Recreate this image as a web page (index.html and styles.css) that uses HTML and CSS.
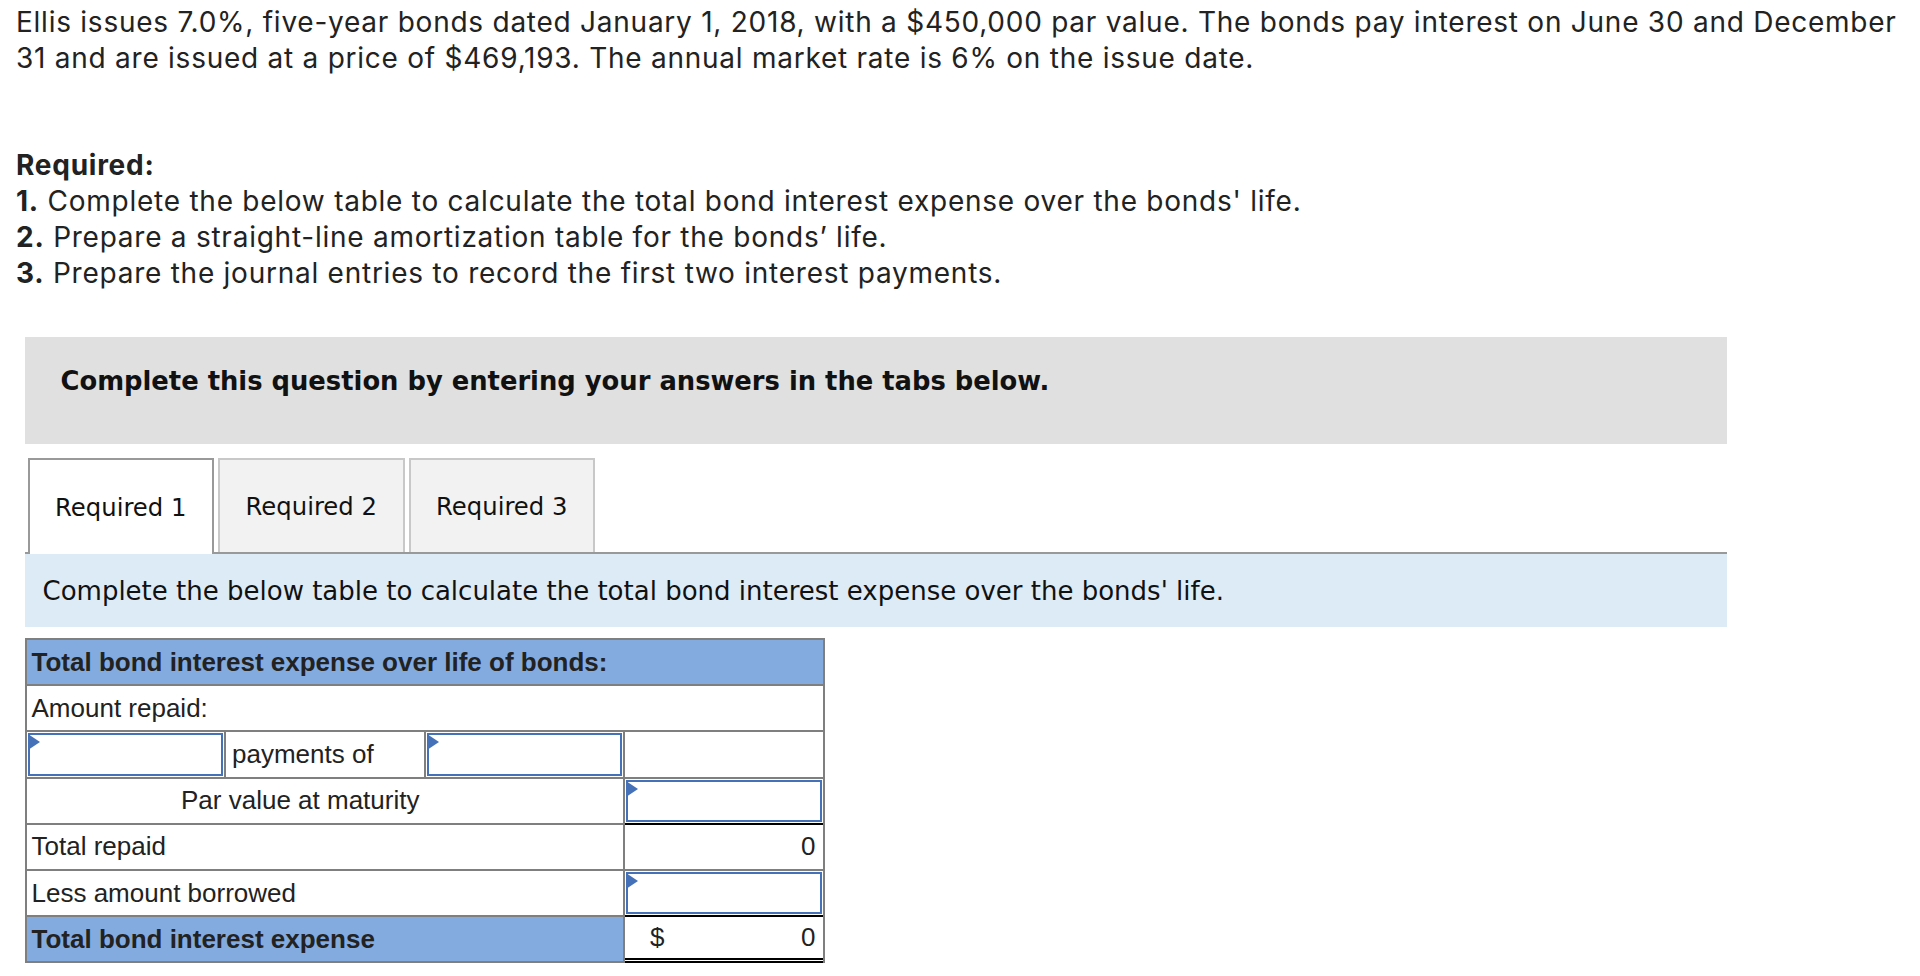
FILE: index.html
```html
<!DOCTYPE html>
<html lang="en">
<head>
<meta charset="utf-8">
<title>Bond interest expense</title>
<link rel="stylesheet" href="styles.css">
</head>
<body>
<div class="page">
  <p class="intro">Ellis issues 7.0%, five-year bonds dated January 1, 2018, with a $450,000 par value. The bonds pay interest on June 30 and December 31 and are issued at a price of $469,193. The annual market rate is 6% on the issue date.</p>

  <div class="required">
    <p class="req-title">Required:</p>
    <p><b>1.</b> Complete the below table to calculate the total bond interest expense over the bonds' life.</p>
    <p><b>2.</b> Prepare a straight-line amortization table for the bonds’ life.</p>
    <p><b>3.</b> Prepare the journal entries to record the first two interest payments.</p>
  </div>

  <div class="panel">
    <div class="notice">Complete this question by entering your answers in the tabs below.</div>

    <div class="tabs">
      <div class="tab active">Required 1</div>
      <div class="tab">Required 2</div>
      <div class="tab">Required 3</div>
    </div>

    <div class="instr">Complete the below table to calculate the total bond interest expense over the bonds' life.</div>

    <div class="sheet">
      <div class="cell hdr span4">Total bond interest expense over life of bonds:</div>
      <div class="cell span4">Amount repaid:</div>

      <div class="cell inp"><div class="field"></div></div>
      <div class="cell label-pay">payments of</div>
      <div class="cell inp"><div class="field"></div></div>
      <div class="cell"></div>

      <div class="cell span3 center">Par value at maturity</div>
      <div class="cell inp"><div class="field"></div></div>

      <div class="cell span3">Total repaid</div>
      <div class="cell num black-top">0</div>

      <div class="cell span3">Less amount borrowed</div>
      <div class="cell inp"><div class="field"></div></div>

      <div class="cell hdr span3">Total bond interest expense</div>
      <div class="cell num total black-top double-bottom"><span>$</span><span>0</span></div>
    </div>
  </div>
</div>
</body>
</html>
```

FILE: styles.css
```css
html, body {
  margin: 0;
  padding: 0;
  background: #fff;
}

body {
  font-family: Inter, "Open Sans", sans-serif;
  color: #222;
}

.page {
  padding: 4px 0 0 16px;
}

.intro {
  margin: 0;
  font-size: 28px;
  letter-spacing: 0.75px;
  line-height: 36px;
  max-width: 1900px;
}

.required {
  margin-top: 71px;
  font-size: 28px;
  letter-spacing: 0.75px;
  line-height: 36px;
}

.required p {
  margin: 0;
}

.required b,
.req-title {
  font-weight: 700;
}

.panel {
  margin-top: 46px;
  margin-left: 8.5px;
  width: 1702px;
}

.notice {
  background: #e0e0e0;
  height: 106.5px;
  box-sizing: border-box;
  padding: 29px 0 0 36px;
  font-family: "DejaVu Sans", Verdana, sans-serif;
  font-weight: bold;
  font-size: 25.8px;
  line-height: 30px;
  color: #111;
}

.tabs {
  display: flex;
  gap: 4px;
  margin-top: 14.5px;
  padding-left: 3px;
  border-bottom: 2px solid #999;
  height: 94px;
}

.tab {
  width: 186.5px;
  box-sizing: border-box;
  border: 2px solid #c8c8c8;
  border-bottom: none;
  background: #f2f2f2;
  display: flex;
  align-items: center;
  justify-content: center;
  font-family: "DejaVu Sans", Verdana, sans-serif;
  font-size: 24.3px;
  color: #111;
}

.tab.active {
  background: #fff;
  border-color: #999;
  height: 96px;
}

.instr {
  background: #ddebf7;
  height: 73px;
  box-sizing: border-box;
  padding-left: 18px;
  display: flex;
  align-items: center;
  font-family: "DejaVu Sans", Verdana, sans-serif;
  font-size: 26px;
  color: #111;
}

.sheet {
  margin-top: 11px;
  display: grid;
  grid-template-columns: repeat(4, 197.5px);
  grid-auto-rows: 44.2px;
  gap: 2px;
  padding: 2px;
  width: max-content;
  background: #7f7f7f;
  font-family: "Liberation Sans", Arial, sans-serif;
  font-size: 26px;
  color: #222;
}

.cell {
  background: #fff;
  display: flex;
  align-items: center;
  padding: 0 5px;
  white-space: nowrap;
}

.span3 { grid-column: span 3; }
.span4 { grid-column: span 4; }

.hdr {
  background: #83abe0;
  font-weight: bold;
}

.center {
  justify-content: center;
  padding-right: 54px;
}

.label-pay {
  padding-left: 6px;
}

.inp {
  padding: 1px;
}

.field {
  flex: 1;
  align-self: stretch;
  border: 2px solid #4471b8;
  background: #fff;
  position: relative;
}

.field::before {
  content: "";
  position: absolute;
  left: -2px;
  top: -1px;
  border-left: 12px solid #4471b8;
  border-top: 8px solid transparent;
  border-bottom: 8px solid transparent;
}

.num {
  justify-content: flex-end;
  padding-right: 7px;
}

.total {
  justify-content: space-between;
  padding-left: 25px;
}

.black-top {
  border-top: 2px solid #000;
  margin-top: -2px;
}

.double-bottom {
  border-bottom: 5px double #000;
  margin-bottom: -2px;
}
```
